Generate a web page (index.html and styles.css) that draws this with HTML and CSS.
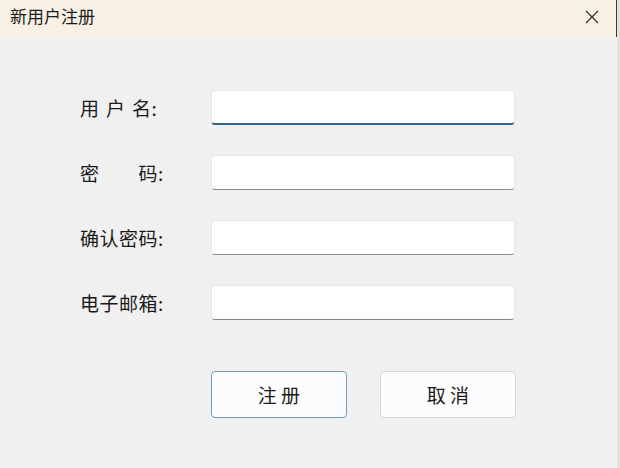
FILE: index.html
```html
<!DOCTYPE html>
<html lang="zh">
<head>
<meta charset="utf-8">
<link rel="stylesheet" href="styles.css">
</head>
<body>
<div class="window">
  <div class="titlebar">
    <span class="title">新用户注册</span>
    <svg class="close" width="14" height="14" viewBox="0 0 14 14"><path d="M1 1 L13 13 M13 1 L1 13" stroke="#333" stroke-width="1.3" fill="none"/></svg>
  </div>
  <div class="content">
    <div class="form">
      <div class="row">
        <label class="label"><span class="spaced">用户</span>名:</label>
        <div class="field focused"></div>
      </div>
      <div class="row">
        <label class="label">密&#12288;&#12288;码:</label>
        <div class="field"></div>
      </div>
      <div class="row">
        <label class="label">确认密码:</label>
        <div class="field"></div>
      </div>
      <div class="row">
        <label class="label">电子邮箱:</label>
        <div class="field"></div>
      </div>
    </div>
    <div class="buttons">
      <button class="btn primary">注 册</button>
      <button class="btn">取 消</button>
    </div>
  </div>
</div>
</body>
</html>
```

FILE: styles.css
```css
html, body {
  margin: 0;
  padding: 0;
}
body {
  width: 620px;
  height: 468px;
  background: #f0f0f0;
  font-family: "Noto Sans CJK SC", "Noto Sans", sans-serif;
  color: #1b1b1b;
  overflow: hidden;
}
.window {
  height: 468px;
  display: flex;
  flex-direction: column;
  border-right: 3px solid #e4e0da;
  box-sizing: border-box;
}
.titlebar {
  height: 37px;
  background: #f8f0e4;
  display: flex;
  align-items: center;
  justify-content: space-between;
  padding: 0 18px 0 10px;
  box-shadow: inset -1px 0 0 #3a3a3a;
}
.title {
  font-size: 17px;
  color: #1a1a1a;
  margin-top: -6px;
}
.close {
  margin-top: -4px;
}
.content {
  padding: 53px 0 0 80px;
}
.form {
  display: flex;
  flex-direction: column;
  gap: 30px;
}
.row {
  display: flex;
  align-items: center;
  height: 35px;
}
.label {
  width: 131px;
  font-size: 19px;
  letter-spacing: 0.5px;
  color: #1a1a1a;
  line-height: 35px;
}
.spaced {
  letter-spacing: 7px;
}
.field {
  width: 302px;
  height: 33px;
  background: #fff;
  border: 1px solid #e6e6e6;
  border-bottom: 1px solid #8a8a8a;
  border-radius: 4px;
}
.field.focused {
  border-bottom: 2px solid #2f6690;
  height: 32px;
}
.buttons {
  display: flex;
  gap: 33px;
  margin: 51px 0 0 131px;
}
.btn {
  width: 136px;
  height: 47px;
  background: #fcfcfc;
  border: 1px solid #d6d6d6;
  border-radius: 4px;
  font-family: "Noto Sans CJK SC", sans-serif;
  font-size: 19px;
  color: #1b1b1b;
  padding: 0;
}
.btn.primary {
  border: 1.5px solid #6f9cbd;
}
```
